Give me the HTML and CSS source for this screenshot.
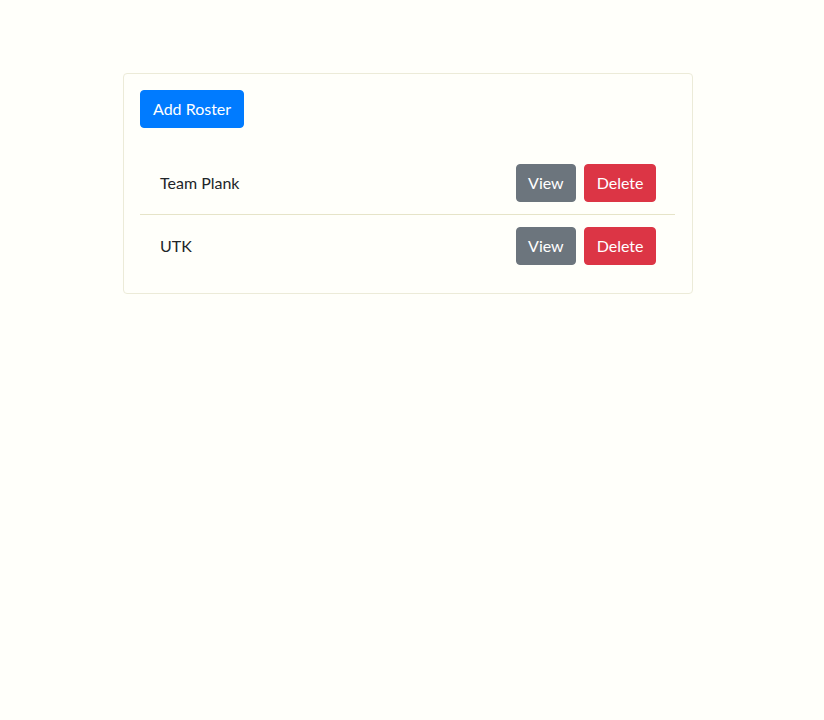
FILE: index.html
```html
<!DOCTYPE html>
<html>
<head>
<meta charset="utf-8">
<link rel="stylesheet" href="styles.css">
</head>
<body>
<div class="card">
  <div class="card-body">
    <button class="btn btn-primary">Add Roster</button>
    <ul class="list">
      <li class="item">
        <span class="name">Team Plank</span>
        <div class="actions">
          <button class="btn btn-secondary">View</button>
          <button class="btn btn-danger">Delete</button>
        </div>
      </li>
      <li class="item">
        <span class="name">UTK</span>
        <div class="actions">
          <button class="btn btn-secondary">View</button>
          <button class="btn btn-danger">Delete</button>
        </div>
      </li>
    </ul>
  </div>
</div>
</body>
</html>
```
FILE: styles.css
```css
html, body {
  margin: 0;
  padding: 0;
  background: #fffffa;
}
body {
  font-family: Lato, "Open Sans", sans-serif;
  font-size: 16px;
  line-height: 1.5;
  color: #212529;
  padding-top: 73px;
}
.card {
  margin-left: 123px;
  width: 570px;
  box-sizing: border-box;
  border: 1px solid #ecebd8;
  border-radius: 4px;
}
.card-body {
  padding: 16px;
}
.btn {
  font-family: inherit;
  font-size: 16px;
  line-height: 24px;
  padding: 6px 12px;
  border: 1px solid transparent;
  border-radius: 4px;
  color: #fff;
  cursor: pointer;
}
.btn-primary { background: #007bff; border-color: #007bff; }
.btn-secondary { background: #6c757d; border-color: #6c757d; padding: 6px 11.5px; }
.btn-danger { background: #dc3545; border-color: #dc3545; padding: 6px 11.5px; }
.list {
  list-style: none;
  margin: 24px 0 0;
  padding: 0;
  width: 535px;
}
.item {
  display: flex;
  align-items: center;
  justify-content: space-between;
  padding: 12px 19px 12px 20px;
  border-bottom: 1px solid #e6e4c8;
}
.item:last-child { border-bottom: none; }
.actions {
  display: flex;
  gap: 8px;
}
```
